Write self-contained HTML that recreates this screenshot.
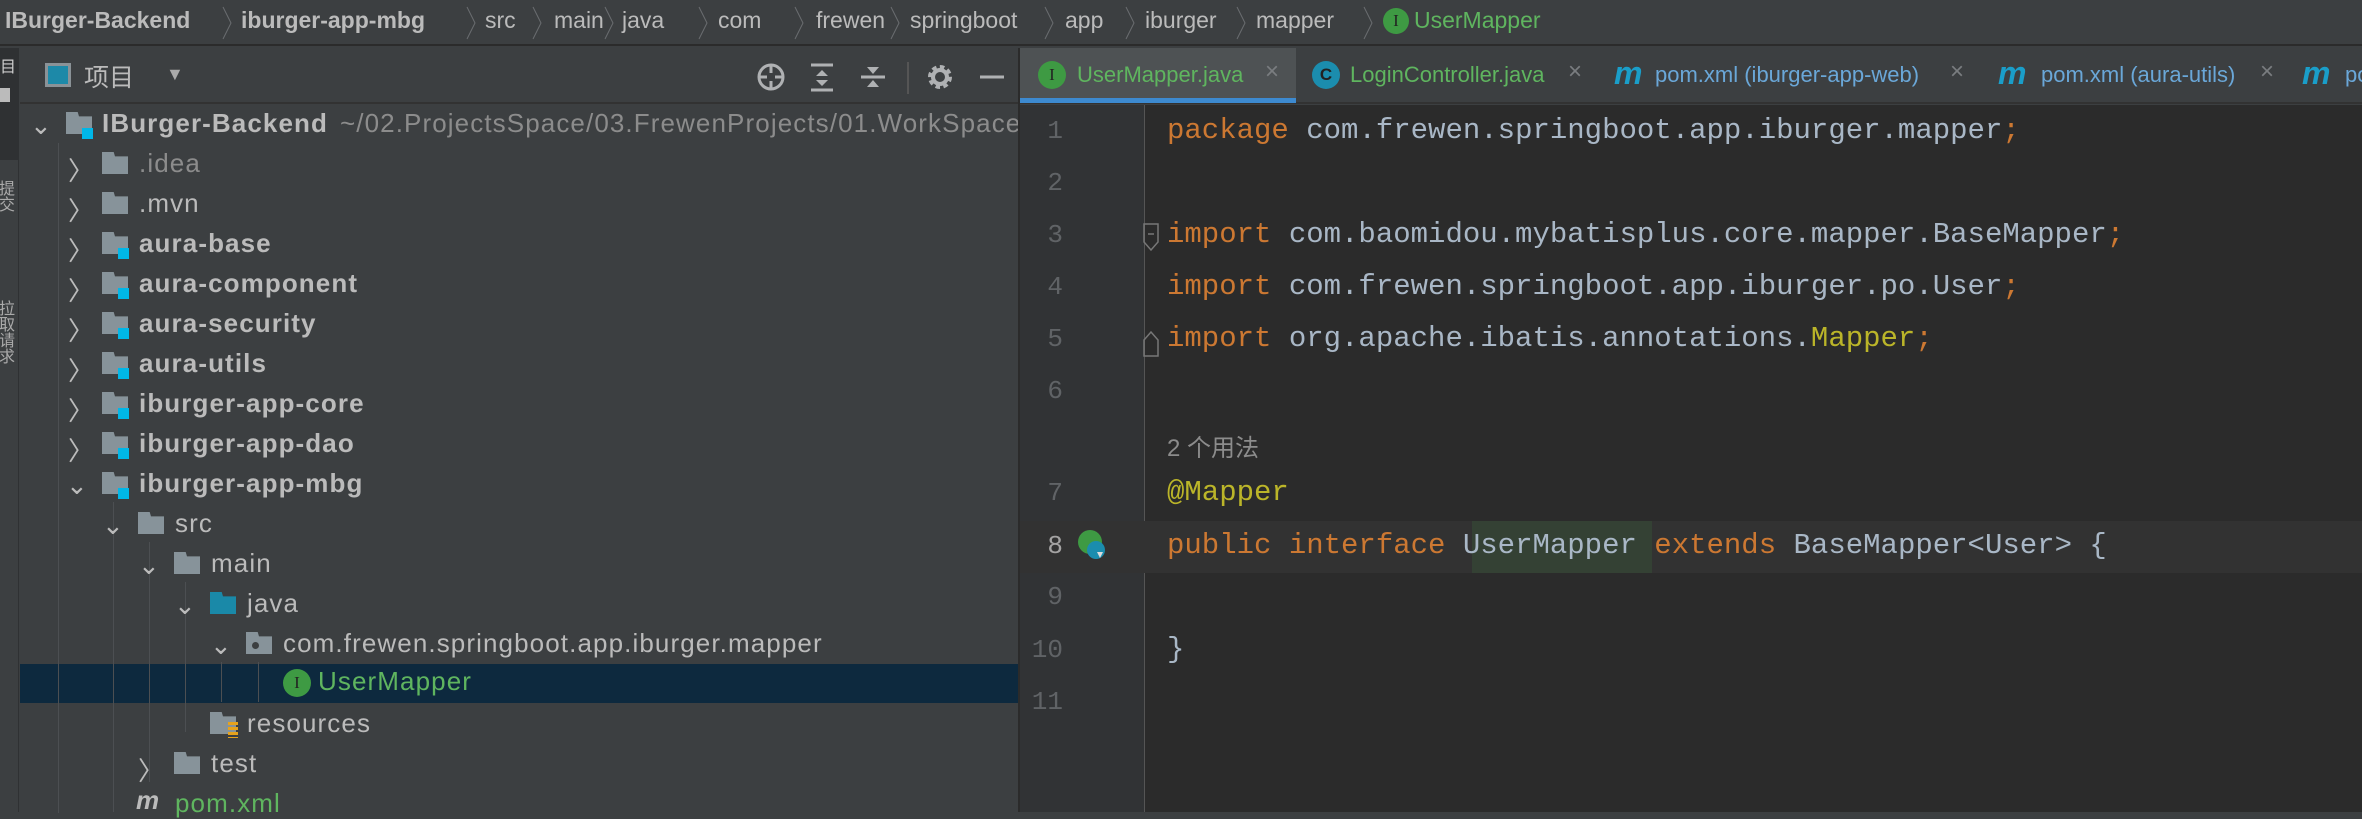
<!DOCTYPE html>
<html><head><meta charset="utf-8"><style>
*{margin:0;padding:0;box-sizing:border-box}
body{width:2362px;height:812px;overflow:hidden;background:#3c3f41;font-family:"Liberation Sans","Noto Sans CJK SC",sans-serif;position:relative}
.a{position:absolute;white-space:nowrap}
.bc{top:0;left:0;width:2362px;height:46px;background:#3c3f41;border-bottom:2px solid #2b2b2b}
.bc span{position:absolute;top:7px;font-size:23px;color:#bbbbbb}
.bc svg{position:absolute;top:6px}
.tree span{position:absolute;font-size:26px;letter-spacing:1.1px;color:#bbbbbb;white-space:nowrap}
.chev{position:absolute;font-size:20px;color:#9a9da0;letter-spacing:0}
.fold{position:absolute;width:26px;height:22px;background:#87939a;clip-path:polygon(0 0,45% 0,50% 20%,100% 20%,100% 100%,0 100%)}
.mod{position:absolute;width:11px;height:11px;background:#00b7e8}
.code{position:absolute;left:1167px;font-family:"Liberation Mono",monospace;font-size:29px;color:#a9b7c6;white-space:pre}
.k{color:#cc7832}
.ln{position:absolute;width:60px;left:1003px;text-align:right;font-family:"Liberation Mono",monospace;font-size:26px;color:#606366}
.tab{position:absolute;top:62px;font-size:22px}
.circ{position:absolute;width:28px;height:28px;border-radius:50%;color:#222;font-size:17px;text-align:center;line-height:28px;font-family:"Liberation Serif",serif}
.m{position:absolute;top:55px;font-size:32px;font-weight:bold;font-style:italic;color:#1a9ec9;font-family:"Liberation Sans",sans-serif}
</style></head><body>
<div class="a bc">
<span style="left:5px;font-weight:bold">IBurger-Backend</span><svg style="left:222px" width="10" height="34"><path d="M1 1L9 17L1 33" fill="none" stroke="#6a6d70"/></svg>
<span style="left:241px;font-weight:bold">iburger-app-mbg</span><svg style="left:466px" width="10" height="34"><path d="M1 1L9 17L1 33" fill="none" stroke="#6a6d70"/></svg>
<span style="left:485px">src</span><svg style="left:532px" width="10" height="34"><path d="M1 1L9 17L1 33" fill="none" stroke="#6a6d70"/></svg>
<span style="left:554px">main</span><svg style="left:604px" width="10" height="34"><path d="M1 1L9 17L1 33" fill="none" stroke="#6a6d70"/></svg>
<span style="left:622px">java</span><svg style="left:698px" width="10" height="34"><path d="M1 1L9 17L1 33" fill="none" stroke="#6a6d70"/></svg>
<span style="left:718px">com</span><svg style="left:794px" width="10" height="34"><path d="M1 1L9 17L1 33" fill="none" stroke="#6a6d70"/></svg>
<span style="left:816px">frewen</span><svg style="left:890px" width="10" height="34"><path d="M1 1L9 17L1 33" fill="none" stroke="#6a6d70"/></svg>
<span style="left:910px">springboot</span><svg style="left:1044px" width="10" height="34"><path d="M1 1L9 17L1 33" fill="none" stroke="#6a6d70"/></svg>
<span style="left:1065px">app</span><svg style="left:1125px" width="10" height="34"><path d="M1 1L9 17L1 33" fill="none" stroke="#6a6d70"/></svg>
<span style="left:1145px">iburger</span><svg style="left:1236px" width="10" height="34"><path d="M1 1L9 17L1 33" fill="none" stroke="#6a6d70"/></svg>
<span style="left:1256px">mapper</span><svg style="left:1363px" width="10" height="34"><path d="M1 1L9 17L1 33" fill="none" stroke="#6a6d70"/></svg>
<div class="circ" style="left:1383px;top:8px;background:#3e9a43;width:26px;height:26px;line-height:26px">I</div>
<span style="left:1414px;color:#5fb55f">UserMapper</span>
</div>
<!-- left strip -->
<div class="a" style="left:0;top:48px;width:19px;height:764px;background:#3c3f41;border-right:1px solid #2f3133"></div>
<div class="a" style="left:0;top:48px;width:19px;height:112px;background:#2f3133"></div>
<div class="a" style="left:0;top:88px;width:10px;height:14px;background:#bbb"></div>
<div class="a" style="left:0;top:60px;font-size:16px;color:#ccc;width:12px;line-height:16px">目</div>
<div class="a" style="left:0;top:180px;font-size:16px;color:#aaa;width:12px;line-height:16px;writing-mode:vertical-rl">提交</div>
<div class="a" style="left:0;top:300px;font-size:16px;color:#aaa;width:12px;line-height:16px;writing-mode:vertical-rl">拉取请求</div>
<!-- panel header -->
<div class="a" style="left:20px;top:48px;width:998px;height:56px;background:#3c3f41;border-bottom:2px solid #323232"></div>
<div class="a" style="left:45px;top:63px;width:26px;height:24px;border:3px solid #8a9297;background:#1d89a8"></div>
<div class="a" style="left:84px;top:58px;font-size:25px;color:#bbb">项目</div>
<div class="a" style="left:166px;top:64px;font-size:18px;color:#aaa">▼</div>
<svg class="a" style="left:755px;top:60px" width="260" height="36" viewBox="0 0 260 36">
<circle cx="16" cy="17" r="12" fill="none" stroke="#afb1b3" stroke-width="3"/><path d="M16 5v8M16 21v8M4 17h8M20 17h8" stroke="#afb1b3" stroke-width="3"/>
<path d="M56 5h22M56 30h22" stroke="#afb1b3" stroke-width="3"/><path d="M67 10l-6 6h12zM67 26l-6-6h12z" fill="#afb1b3"/>
<path d="M106 17h24" stroke="#afb1b3" stroke-width="3"/><path d="M118 14l-6-7h12zM118 20l-6 7h12z" fill="#afb1b3"/>
<path d="M153 2v32" stroke="#555" stroke-width="2"/>
<circle cx="185" cy="17" r="9" fill="none" stroke="#afb1b3" stroke-width="6" stroke-dasharray="4 3"/><circle cx="185" cy="17" r="7" fill="none" stroke="#afb1b3" stroke-width="4"/>
<path d="M225 17h24" stroke="#afb1b3" stroke-width="3"/>
</svg>
<!-- tree -->
<div class="a" style="left:20px;top:664px;width:998px;height:39px;background:#0d293e"></div>
<div class="tree">
<div class="a" style="left:58px;top:143px;width:1px;height:670px;background:#4c4f52"></div>
<div class="a" style="left:113px;top:502px;width:1px;height:310px;background:#4c4f52"></div>
<div class="a" style="left:149px;top:542px;width:1px;height:240px;background:#4c4f52"></div>
<div class="a" style="left:185px;top:582px;width:1px;height:150px;background:#4c4f52"></div>
<div class="a" style="left:221px;top:662px;width:1px;height:40px;background:#4c4f52"></div>
<div class="a" style="left:258px;top:662px;width:1px;height:40px;background:#4c4f52"></div>

<span class="chev" style="left:30px;top:110px">⌄</span><div class="fold" style="left:66px;top:112px"></div><div class="mod" style="left:82px;top:128px"></div>
<span style="left:102px;top:108px;font-weight:bold">IBurger-Backend</span><span style="left:340px;top:108px;color:#8c8c8c">~/02.ProjectsSpace/03.FrewenProjects/01.WorkSpace/</span>

<span class="chev" style="left:68px;top:151px">〉</span><div class="fold" style="left:102px;top:152px"></div><span style="left:139px;top:148px;color:#8c8c8c">.idea</span>
<span class="chev" style="left:68px;top:191px">〉</span><div class="fold" style="left:102px;top:192px"></div><span style="left:139px;top:188px">.mvn</span>
<span class="chev" style="left:68px;top:231px">〉</span><div class="fold" style="left:102px;top:232px"></div><div class="mod" style="left:118px;top:248px"></div><span style="left:139px;top:228px;font-weight:bold">aura-base</span>
<span class="chev" style="left:68px;top:271px">〉</span><div class="fold" style="left:102px;top:272px"></div><div class="mod" style="left:118px;top:288px"></div><span style="left:139px;top:268px;font-weight:bold">aura-component</span>
<span class="chev" style="left:68px;top:311px">〉</span><div class="fold" style="left:102px;top:312px"></div><div class="mod" style="left:118px;top:328px"></div><span style="left:139px;top:308px;font-weight:bold">aura-security</span>
<span class="chev" style="left:68px;top:351px">〉</span><div class="fold" style="left:102px;top:352px"></div><div class="mod" style="left:118px;top:368px"></div><span style="left:139px;top:348px;font-weight:bold">aura-utils</span>
<span class="chev" style="left:68px;top:391px">〉</span><div class="fold" style="left:102px;top:392px"></div><div class="mod" style="left:118px;top:408px"></div><span style="left:139px;top:388px;font-weight:bold">iburger-app-core</span>
<span class="chev" style="left:68px;top:431px">〉</span><div class="fold" style="left:102px;top:432px"></div><div class="mod" style="left:118px;top:448px"></div><span style="left:139px;top:428px;font-weight:bold">iburger-app-dao</span>
<span class="chev" style="left:66px;top:470px">⌄</span><div class="fold" style="left:102px;top:472px"></div><div class="mod" style="left:118px;top:488px"></div><span style="left:139px;top:468px;font-weight:bold">iburger-app-mbg</span>
<span class="chev" style="left:102px;top:510px">⌄</span><div class="fold" style="left:138px;top:512px"></div><span style="left:175px;top:508px">src</span>
<span class="chev" style="left:138px;top:550px">⌄</span><div class="fold" style="left:174px;top:552px"></div><span style="left:211px;top:548px">main</span>
<span class="chev" style="left:174px;top:590px">⌄</span><div class="fold" style="left:210px;top:592px;background:#1a89a8"></div><span style="left:247px;top:588px">java</span>
<span class="chev" style="left:210px;top:630px">⌄</span><div class="fold" style="left:246px;top:632px"></div><div class="a" style="left:252px;top:642px;width:7px;height:7px;border-radius:50%;background:#3c3f41"></div><span style="left:283px;top:628px">com.frewen.springboot.app.iburger.mapper</span>
<div class="circ" style="left:283px;top:669px;background:#3e9a43">I</div><span style="left:318px;top:666px;color:#5fb55f">UserMapper</span>
<div class="fold" style="left:210px;top:712px"></div><div class="a" style="left:228px;top:722px;width:10px;height:16px;background:repeating-linear-gradient(#e5a21d 0 3px,transparent 3px 5px)"></div><span style="left:247px;top:708px">resources</span>
<span class="chev" style="left:138px;top:751px">〉</span><div class="fold" style="left:174px;top:752px"></div><span style="left:211px;top:748px">test</span>
<span class="m" style="left:136px;top:785px">m</span><span style="left:175px;top:788px;color:#5fb55f">pom.xml</span>
</div>
<!-- editor -->
<div class="a" style="left:1018px;top:48px;width:2px;height:764px;background:#2b2b2b"></div>
<div class="a" style="left:1020px;top:48px;width:1342px;height:56px;background:#3c3f41;border-bottom:2px solid #323232"></div>
<div class="a" style="left:1020px;top:48px;width:276px;height:55px;background:#4e5254"></div>
<div class="a" style="left:1020px;top:98px;width:276px;height:5px;background:#3d8ad0"></div>
<div class="circ" style="left:1038px;top:61px;background:#3e9a43">I</div><span class="a tab" style="left:1077px;color:#5fb55f">UserMapper.java</span><span class="a tab" style="left:1265px;top:58px;color:#7a7d80;font-size:24px">×</span>
<div class="circ" style="left:1312px;top:61px;background:#1b8dae;font-family:'Liberation Sans';font-weight:bold">C</div><span class="a tab" style="left:1350px;color:#5fb55f">LoginController.java</span><span class="a tab" style="left:1568px;top:58px;color:#7a7d80;font-size:24px">×</span>
<span class="a m" style="left:1614px">m</span><span class="a tab" style="left:1655px;color:#6aa7d8">pom.xml (iburger-app-web)</span><span class="a tab" style="left:1950px;top:58px;color:#7a7d80;font-size:24px">×</span>
<span class="a m" style="left:1998px">m</span><span class="a tab" style="left:2041px;color:#6aa7d8">pom.xml (aura-utils)</span><span class="a tab" style="left:2260px;top:58px;color:#7a7d80;font-size:24px">×</span>
<span class="a m" style="left:2302px">m</span><span class="a tab" style="left:2345px;color:#6aa7d8">po</span>

<div class="a" style="left:1020px;top:105px;width:1342px;height:707px;background:#2b2b2b"></div>
<div class="a" style="left:1020px;top:105px;width:125px;height:707px;background:#313335;border-right:1px solid #555"></div>
<div class="a" style="left:1020px;top:521px;width:1342px;height:52px;background:#323232"></div>
<div class="a" style="left:1472px;top:521px;width:180px;height:52px;background:#344134"></div>
<div class="ln" style="top:116px">1</div><div class="ln" style="top:168px">2</div><div class="ln" style="top:220px">3</div><div class="ln" style="top:272px">4</div><div class="ln" style="top:324px">5</div><div class="ln" style="top:376px">6</div>
<div class="ln" style="top:478px">7</div><div class="ln" style="top:531px;color:#a4a3a3">8</div><div class="ln" style="top:582px">9</div><div class="ln" style="top:635px">10</div><div class="ln" style="top:687px">11</div>
<svg class="a" style="left:1140px;top:220px" width="24" height="140"><path d="M4 4h14v18l-7 8-7-8z" fill="none" stroke="#777" stroke-width="1.5"/><path d="M8 14h6" stroke="#777" stroke-width="1.5"/><path d="M4 120l7-8 7 8v16H4z" fill="none" stroke="#777" stroke-width="1.5"/></svg>
<svg class="a" style="left:1076px;top:528px" width="34" height="36"><circle cx="14" cy="14" r="12" fill="#3e9a43"/><circle cx="20" cy="22" r="9" fill="#1b8dae"/><path d="M21 24l6 0-3 6z" fill="#ddd"/></svg>
<div class="code" style="top:114px"><span class="k">package</span> com.frewen.springboot.app.iburger.mapper<span class="k">;</span></div>
<div class="code" style="top:218px"><span class="k">import</span> com.baomidou.mybatisplus.core.mapper.BaseMapper<span class="k">;</span></div>
<div class="code" style="top:270px"><span class="k">import</span> com.frewen.springboot.app.iburger.po.User<span class="k">;</span></div>
<div class="code" style="top:322px"><span class="k">import</span> org.apache.ibatis.annotations.<span style="color:#bbb529">Mapper</span><span class="k">;</span></div>
<div class="a" style="left:1167px;top:428px;font-size:24px;color:#8c8c8c;font-family:'Liberation Sans','Noto Sans CJK SC',sans-serif">2 个用法</div>
<div class="code" style="top:476px;color:#bbb529">@Mapper</div>
<div class="code" style="top:529px"><span class="k">public interface</span> UserMapper <span class="k">extends</span> BaseMapper&lt;User&gt; {</div>
<div class="code" style="top:633px">}</div>
</body></html>
